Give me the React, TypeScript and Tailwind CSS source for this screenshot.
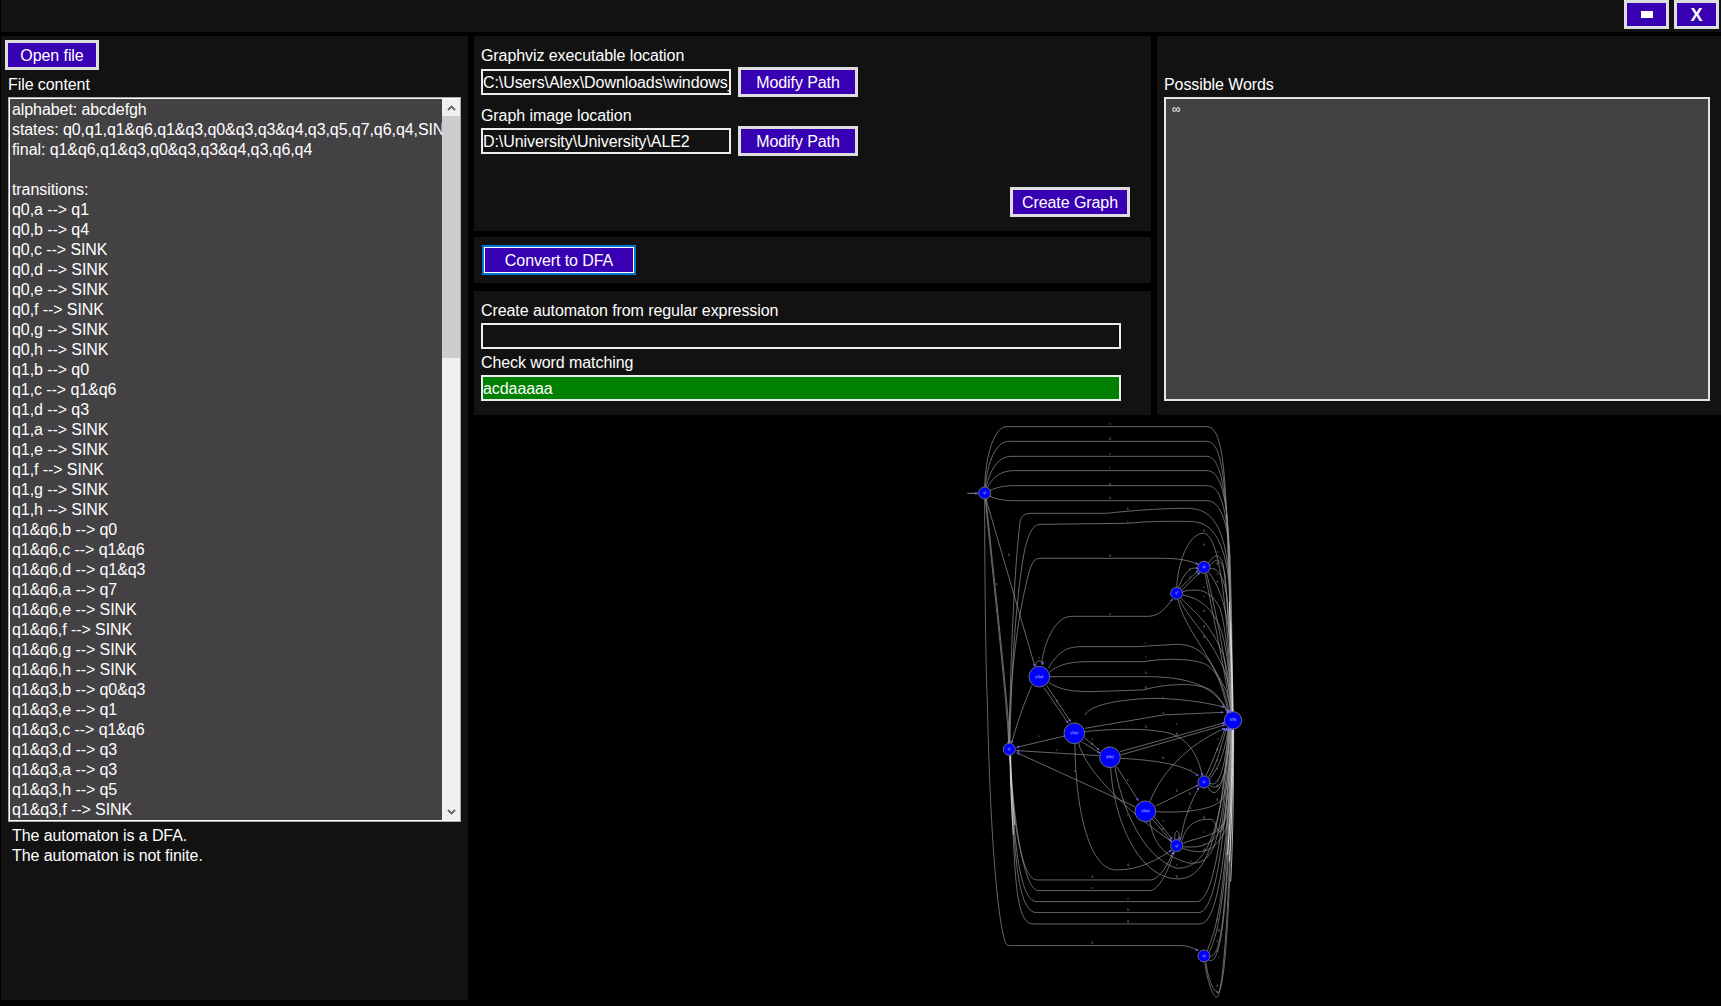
const FILE_LINES = [
  'alphabet: abcdefgh',
  'states: q0,q1,q1&q6,q1&q3,q0&q3,q3&q4,q3,q5,q7,q6,q4,SINK',
  'final: q1&q6,q1&q3,q0&q3,q3&q4,q3,q6,q4',
  '',
  'transitions:',
  'q0,a --> q1',
  'q0,b --> q4',
  'q0,c --> SINK',
  'q0,d --> SINK',
  'q0,e --> SINK',
  'q0,f --> SINK',
  'q0,g --> SINK',
  'q0,h --> SINK',
  'q1,b --> q0',
  'q1,c --> q1&q6',
  'q1,d --> q3',
  'q1,a --> SINK',
  'q1,e --> SINK',
  'q1,f --> SINK',
  'q1,g --> SINK',
  'q1,h --> SINK',
  'q1&q6,b --> q0',
  'q1&q6,c --> q1&q6',
  'q1&q6,d --> q1&q3',
  'q1&q6,a --> q7',
  'q1&q6,e --> SINK',
  'q1&q6,f --> SINK',
  'q1&q6,g --> SINK',
  'q1&q6,h --> SINK',
  'q1&q3,b --> q0&q3',
  'q1&q3,e --> q1',
  'q1&q3,c --> q1&q6',
  'q1&q3,d --> q3',
  'q1&q3,a --> q3',
  'q1&q3,h --> q5',
  'q1&q3,f --> SINK',
];

// graph coords are the 3x crop coords: x = 950 + cx / 3, y = 415 + cy / 3
const UPPER_EDGES = [
  'M104,216 C106,130 130,35 170,35 L770,35 C810,35 822,120 830,300 C838,500 846,800 847,896',
  'M106,216 C112,140 140,79 175,79 L770,79 C805,79 820,140 832,320 C840,540 846,800 846,896',
  'M108,217 C120,170 140,124 185,124 L770,124 C800,124 820,170 834,340 C842,560 846,800 845,896',
  'M112,219 C125,190 150,167 190,167 L770,167 C800,167 825,200 836,360 C842,580 846,800 844,896',
  'M120,226 C140,218 160,212 190,212 L770,212 C800,212 825,240 838,400 C844,600 846,800 848,896',
  'M120,244 C140,252 160,257 190,257 L770,257 C800,257 830,290 840,420 C846,620 848,800 849,896',
  'M108,252 L255,755',
  'M106,252 C130,500 170,850 176,985',
  'M108,252 C135,520 175,870 179,985',
  'M104,252 C104,500 108,800 112,855 C118,1155 135,1480 165,1580 C170,1592 175,1592 180,1592 L695,1592 C715,1592 730,1600 745,1607',
  'M178,985 C180,800 190,500 208,340 C210,310 215,296 240,295 L470,295 C560,285 650,280 710,280 C780,280 825,320 838,500 C845,700 847,800 847,896',
  'M180,985 C185,700 205,500 225,400 C240,345 250,328 275,328 L530,325 C600,318 680,318 730,320 C790,325 830,380 842,550 L847,896',
  'M175,985 C185,700 215,560 235,480 C245,440 255,430 270,430 L640,430 C680,430 715,435 745,448',
  'M275,745 C285,670 320,604 365,604 L595,604 C630,604 650,575 668,552',
  'M295,760 C330,700 360,695 400,695 L560,695 L680,688 C750,688 800,730 835,893',
  'M300,770 C330,745 370,740 420,740 L580,740 C640,730 720,730 760,745 C800,760 825,820 838,893',
  'M300,785 L580,785 C680,785 790,795 835,896',
  'M296,803 C330,825 370,830 420,830 L580,825 C650,805 750,800 790,830 C810,850 825,870 835,898',
  'M258,752 C255,733 280,733 277,750',
  'M245,812 C225,860 205,910 185,985',
  'M282,818 L355,925',
  'M290,812 L362,920',
  'M680,518 C685,430 720,355 760,355 C800,355 830,500 845,893',
  'M685,518 C700,480 720,450 745,462',
  'M690,520 L745,466',
  'M697,524 L750,472',
  'M698,530 C740,520 780,520 810,580 C830,640 842,800 845,893',
  'M698,540 C750,550 790,580 815,650 C830,700 842,800 845,893',
  'M694,550 C730,590 780,620 820,720 C832,760 842,820 845,893',
  'M690,555 C720,620 780,660 825,770 C835,800 842,840 845,893',
  'M684,553 C700,630 760,690 830,830 L845,893',
  'M775,445 C790,420 810,410 820,450 C835,560 842,760 846,893',
  'M780,452 C800,425 815,430 825,480 C838,600 844,780 847,893',
  'M781,462 C800,455 820,480 830,540 C840,640 845,790 848,893',
  'M776,472 C800,500 825,560 835,640 C842,720 847,800 848,893',
  'M770,475 C785,540 825,700 844,893',
  'M766,477 C780,560 820,740 843,893',
];

// same idea for the lower crop: x = 950 + cx / 3, y = 700 + cy / 3
const LOWER_EDGES = [
  'M405,45 C420,15 500,0 600,-5 C680,-5 760,5 824,22',
  'M405,85 L640,45 L820,37',
  'M405,95 C500,85 600,85 660,100 C720,120 745,170 757,228',
  'M345,108 L200,142',
  'M448,167 L200,152',
  'M555,320 L200,158',
  'M405,115 L448,150',
  'M395,125 L450,160',
  'M510,155 L825,68',
  'M512,165 L825,75',
  'M512,175 C600,180 700,190 745,228',
  'M500,200 L565,302',
  'M375,130 C375,300 410,510 500,510 C570,510 620,480 665,450',
  'M385,128 C410,220 540,340 665,425',
  'M482,202 C490,350 560,530 680,537 C750,537 810,480 835,82',
  'M495,200 C510,300 570,470 680,505 C750,505 815,450 838,84',
  'M600,305 C640,200 740,120 825,85',
  'M618,318 L745,255',
  'M618,335 C700,340 790,330 815,300 C830,280 840,200 845,84',
  'M600,362 C610,430 640,470 720,490 C790,490 815,450 840,84',
  'M605,355 L665,425',
  'M612,350 L667,418',
  'M692,420 C700,360 725,300 747,262',
  'M675,420 C670,385 692,385 687,420',
  'M695,425 C710,370 740,358 780,358 C800,358 795,390 810,395 C825,395 835,300 845,84',
  'M698,430 C750,410 800,410 820,370 C830,330 840,200 843,84',
  'M698,440 C750,445 800,440 830,350 C838,300 842,200 844,84',
  'M698,445 C750,465 800,460 830,380 C838,320 844,200 846,84',
  'M775,232 C800,200 815,130 830,84',
  'M778,238 C800,210 820,180 835,84',
  'M780,250 C800,260 820,240 838,84',
  'M778,255 C810,280 830,240 840,84',
  'M775,262 C800,310 830,250 842,84',
  'M768,228 C785,190 810,130 825,84',
  'M180,166 C185,350 215,540 260,540 L600,540 C630,540 655,490 670,455',
  'M180,166 C190,350 220,572 265,572 L600,572 C630,570 660,500 672,455',
  'M180,166 C190,400 205,605 260,605 L740,605 C790,605 820,400 845,84',
  'M180,166 C192,450 200,638 260,638 L745,638 C800,638 825,400 847,84',
  'M180,166 C195,500 190,672 250,672 L750,672 C810,672 835,400 848,84',
  'M772,752 C790,700 830,650 845,84',
  'M775,760 C800,720 835,600 847,84',
  'M778,770 C810,770 830,700 848,84',
  'M775,780 C810,800 835,680 848,84',
  'M765,788 C770,840 790,892 800,892 C820,892 840,600 850,84',
  'M768,788 C775,840 790,875 805,878 C830,860 845,500 849,84',
];

// where the SINK edges overlap they read as almost white
const SINK_BUNCH = [
  'M838,560 C843,700 846,800 847,892',
  'M842,620 C845,720 848,810 849,892',
  'M847,945 C846,1100 842,1220 832,1320',
  'M849,945 C848,1100 845,1240 838,1340',
  'M851,945 C851,1150 848,1300 842,1400',
  'M180,1022 C181,1100 184,1180 190,1260',
  'M182,1022 C184,1100 188,1160 194,1230',
];

const UPPER_LABELS: [number, number, string][] = [
  [480, 31, 'c'], [480, 74, 'd'], [480, 119, 'e'], [480, 162, 'f'], [480, 209, 'g'], [480, 252, 'h'],
  [533, 285, 'h'], [533, 323, 'f'], [480, 426, 'd'], [480, 599, 'a'], [177, 423, 'b'], [140, 509, 'a'], [141, 592, 'e'],
  [587, 688, 'e'], [587, 730, 'f'], [587, 777, 'h'], [587, 818, 'g'], [640, 851, 'f'], [267, 731, 'c'], [320, 860, 'd'],
  [762, 352, 'b'], [762, 392, 'h'], [803, 415, 'f'], [802, 447, 'g'], [802, 479, 'e'], [802, 503, 'd'], [719, 465, 'a'],
  [720, 490, 'c'], [762, 520, 'e'], [762, 548, 'f'], [762, 591, 'd'], [762, 636, 'g'], [762, 670, 'h'],
];

const LOWER_LABELS: [number, number, string][] = [
  [640, 41, 'a'], [588, 84, 'b'], [680, 76, 'c'], [680, 105, 'd'], [267, 112, 'e'], [320, 154, 'e'], [427, 121, 'c'],
  [425, 135, 'd'], [640, 178, 'b'], [533, 242, 'a'], [375, 216, 'a'], [533, 349, 'e'], [534, 498, 'd'], [427, 534, 'd'],
  [427, 568, 'a'], [534, 600, 'f'], [534, 633, 'h'], [534, 667, 'g'], [427, 731, 'b'], [681, 454, 'e'], [680, 276, 'b'],
  [722, 327, 'e'], [720, 286, 'h'], [762, 353, 'g'], [762, 400, 'e'], [762, 435, 'f'], [762, 452, 'd'], [721, 487, 'c'],
  [680, 497, 'f'], [680, 532, 'g'], [722, 214, 'f'], [640, 367, 'c'], [638, 389, 'd'], [802, 245, 'e'], [802, 262, 'd'],
  [802, 300, 'g'], [803, 119, 'f'], [802, 150, 'g'], [802, 183, 'a'], [802, 211, 'c'], [802, 662, 'f'], [806, 693, 'g'],
  [802, 725, 'a'], [802, 755, 'c'], [806, 775, 'e'], [802, 860, 'd'], [802, 880, 'h'],
];

const NODES: [number, number, number, string][] = [
  [104, 234, 18, 'q0'],
  [762, 457, 18, 'q6'],
  [680, 535, 18, 'q7'],
  [268, 785, 31, 'q1&q6'],
  [849, 916, 26, 'SINK'],
  [373, 955, 31, 'q1&q3'],
  [178, 1003, 18, 'q1'],
  [480, 1027, 31, 'q0&q3'],
  [762, 1101, 18, 'q5'],
  [586, 1189, 31, 'q3&q4'],
  [680, 1292, 18, 'q3'],
  [762, 1623, 18, 'q4'],
];

function PurpleButton({ label, className }: { label: string; className: string }) {
  return (
    <button
      type="button"
      className={`h-[30px] shrink-0 border-[3px] border-[#dedede] bg-[#3700b3] pt-px text-white ${className}`}
    >
      {label}
    </button>
  );
}

function TextBox({ value, className }: { value: string; className: string }) {
  return (
    <input
      readOnly
      value={value}
      className={`h-[26px] border-2 border-[#ececec] pt-px text-white outline-none ${className}`}
    />
  );
}

function Chevron({ up }: { up?: boolean }) {
  return (
    <svg width="9" height="6" viewBox="0 0 9 6" className={up ? '' : 'rotate-180'}>
      <path d="M1 5 L4.5 1.5 L8 5" fill="none" stroke="#606060" strokeWidth="1.8" />
    </svg>
  );
}

function GraphView() {
  return (
    <svg viewBox="474 415 1247 591" className="block h-full w-full">
      <defs>
        <marker id="tip" markerWidth="9" markerHeight="8" refX="8" refY="4" orient="auto" markerUnits="userSpaceOnUse">
          <path d="M0 0 L9 4 L0 8 Z" fill="#6a6aff" />
        </marker>
      </defs>
      <g transform="translate(950 415) scale(0.3333)">
        <path d="M52,235 L84,235" stroke="#aaaaaa" strokeWidth="2.4" markerEnd="url(#tip)" />
        <g fill="none" stroke="#929292" strokeWidth="2.1">
          {UPPER_EDGES.map((d) => (
            <path key={d} d={d} markerEnd="url(#tip)" />
          ))}
        </g>
        <g transform="translate(0 855)" fill="none" stroke="#929292" strokeWidth="2.1">
          {LOWER_EDGES.map((d) => (
            <path key={d} d={d} markerEnd="url(#tip)" />
          ))}
        </g>
        <g fill="none" stroke="#eeeeee" strokeWidth="2.2">
          {SINK_BUNCH.map((d) => (
            <path key={d} d={d} />
          ))}
        </g>
        <g fill="#b4b4b4" fontSize="9" textAnchor="middle" fontFamily="'Liberation Serif', serif">
          {UPPER_LABELS.map(([x, y, t]) => (
            <text key={`${x}-${y}`} x={x} y={y}>{t}</text>
          ))}
          {LOWER_LABELS.map(([x, y, t]) => (
            <text key={`${x}-${y}`} x={x} y={y + 855}>{t}</text>
          ))}
        </g>
        {NODES.map(([x, y, r, name]) => (
          <g key={name}>
            <circle cx={x} cy={y} r={r} fill="#0000ff" stroke="#6e6e6e" strokeWidth="3" />
            <text x={x} y={y + 3} fill="#c8c8ff" fontSize="9" textAnchor="middle" fontFamily="'Liberation Serif', serif">
              {name}
            </text>
          </g>
        ))}
      </g>
    </svg>
  );
}

export default function App() {
  return (
    <div className="flex h-[1006px] w-[1721px] flex-col overflow-hidden bg-black text-base leading-5 tracking-[-0.08px] text-white [font-family:'Liberation_Sans',Arial,sans-serif]">
      <div className="ml-px flex h-8 shrink-0 justify-end gap-[5px] bg-[#121212] pr-0.5">
        <button type="button" className="flex h-[29px] w-[45px] items-center justify-center border-[3px] border-[#dedede] bg-[#3700b3]">
          <span className="h-[7px] w-3 bg-white" />
        </button>
        <button type="button" className="h-[29px] w-[45px] border-[3px] border-[#dedede] bg-[#3700b3] text-lg leading-none font-bold text-white">
          X
        </button>
      </div>

      <div className="mt-1 flex min-h-0 flex-1">
        <div className="ml-px h-[964px] w-[467px] shrink-0 bg-[#121212] pt-1">
          <PurpleButton label="Open file" className="ml-1 w-[94px]" />
          <div className="mt-[5px] ml-[7px]">File content</div>
          <div className="mt-[2px] ml-[7px] flex h-[725px] w-[453px] border border-[#a8a8a8]">
            <div className="flex min-w-0 flex-1 border-y border-l border-white bg-[#434144]">
              <div className="min-w-0 flex-1 overflow-hidden pt-px pl-[2px] whitespace-pre">
                {FILE_LINES.map((line, i) => (
                  <div key={i} className="h-5">{line}</div>
                ))}
              </div>
            </div>
            <div className="flex w-[18px] shrink-0 flex-col border-y border-white bg-[#f0f0f0]">
              <div className="flex h-[17px] items-center justify-center"><Chevron up /></div>
              <div className="h-[242px] bg-[#cdcdcd]" />
              <div className="flex-1" />
              <div className="flex h-[17px] items-center justify-center"><Chevron /></div>
            </div>
          </div>
          <div className="mt-1 pl-[11px]">
            <div>The automaton is a DFA.</div>
            <div>The automaton is not finite.</div>
          </div>
        </div>

        <div className="ml-1.5 flex min-w-0 flex-1 flex-col">
          <div className="flex h-[379px] shrink-0 gap-1.5">
            <div className="flex w-[677px] shrink-0 flex-col">
              <div className="h-[195px] bg-[#121212] pt-[10px] pl-[7px]">
                <div>Graphviz executable location</div>
                <div className="mt-px flex items-center gap-[7px]">
                  <TextBox value={'C:\\Users\\Alex\\Downloads\\windows_10_cmake_Release'} className="w-[250px] bg-[#121212]" />
                  <PurpleButton label="Modify Path" className="w-[120px]" />
                </div>
                <div className="mt-[9px]">Graph image location</div>
                <div className="flex items-center gap-[7px]">
                  <TextBox value={'D:\\University\\University\\ALE2'} className="w-[250px] bg-[#121212]" />
                  <PurpleButton label="Modify Path" className="w-[120px]" />
                </div>
                <div className="mt-[31px] flex justify-end pr-[21px]">
                  <PurpleButton label="Create Graph" className="w-[120px]" />
                </div>
              </div>
              <div className="mt-1.5 h-[46px] bg-[#121212] pt-2 pl-2">
                <button
                  type="button"
                  className="h-[30px] w-[154px] border-2 border-[#0078d7] bg-[#3700b3] pt-px text-white shadow-[inset_0_0_0_1px_#ffffff]"
                >
                  Convert to DFA
                </button>
              </div>
              <div className="mt-2 h-[124px] bg-[#121212] pt-[10px] pl-[7px]">
                <div>Create automaton from regular expression</div>
                <TextBox value="" className="mt-[2px] block w-[640px] bg-[#121212]" />
                <div className="mt-1">Check word matching</div>
                <TextBox value="acdaaaaa" className="mt-[2px] block w-[640px] bg-[#008000]" />
              </div>
            </div>
            <div className="min-w-0 flex-1 bg-[#121212] pt-[39px] pl-[7px]">
              <div>Possible Words</div>
              <div className="mt-[2px] h-[304px] w-[546px] border-2 border-[#e4e4e4] bg-[#434144] pt-[2px] pl-1.5 text-xs">
                ∞
              </div>
            </div>
          </div>
          <div className="min-h-0 flex-1">
            <GraphView />
          </div>
        </div>
      </div>
    </div>
  );
}
